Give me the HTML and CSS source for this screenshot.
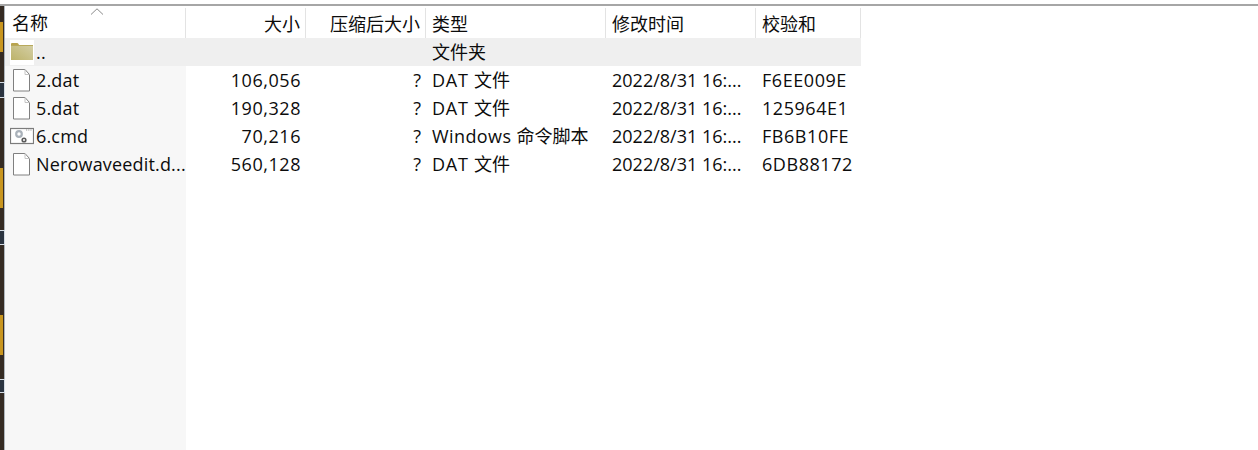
FILE: index.html
```html
<!DOCTYPE html>
<html lang="zh">
<head>
<meta charset="utf-8">
<title>文件列表</title>
<link rel="stylesheet" href="styles.css">
</head>
<body>
<div class="topline"></div>
<div class="desktop">
  <div class="strip">
    <div class="spot gold g1"></div>
    <div class="spot box b1"></div>
    <div class="spot gold g2"></div>
    <div class="spot box b2"></div>
    <div class="spot gold g3"></div>
    <div class="spot box b3"></div>
  </div>
  <div class="list">
    <div class="row head">
      <div class="c name">名称<svg class="sort" width="14" height="7" viewBox="0 0 14 7"><path d="M1 6.500 7 .8l6 5.700" fill="none" stroke="#8a8a8a"/></svg></div>
      <div class="c size">大小</div>
      <div class="c comp">压缩后大小</div>
      <div class="c type">类型</div>
      <div class="c time">修改时间</div>
      <div class="c sum">校验和</div>
    </div>
    <div class="body">
      <div class="namebg"></div>
      <div class="row up">
        <div class="c name">
          <svg class="ico" width="24" height="28" viewBox="0 0 24 28"><defs><linearGradient id="fg" x1="0" y1="1" x2="1" y2="0"><stop offset="0" stop-color="#bdb36a"/><stop offset="1" stop-color="#d4cfa6"/></linearGradient></defs><rect y="2" width="24" height="25" fill="#fff"/><path d="M1 8V6q0-1 1-1h5q1 0 1.500 1l.5 1z" fill="#b9a44e"/><path d="M1 7h22v15H1z" fill="url(#fg)"/><path d="M1 7h22v1H1z" fill="#b8a95c"/></svg>
          <span class="n">..</span>
        </div>
        <div class="c size"></div><div class="c comp"></div>
        <div class="c type">文件夹</div>
        <div class="c time"></div><div class="c sum"></div>
      </div>
      <div class="row">
        <div class="c name"><svg class="ico" width="24" height="28" viewBox="0 0 24 28"><path class="doc" d="M3.500 3.500h11.500l4.500 5v16.500h-16z"/><path class="fold" d="M15 3.500v5h4.500"/></svg><span class="n">2.dat</span></div>
        <div class="c size">106,056</div><div class="c comp">?</div><div class="c type"><span class="dat">DAT </span>文件</div><div class="c time">2022/8/31 16:...</div><div class="c sum">F6EE009E</div>
      </div>
      <div class="row">
        <div class="c name"><svg class="ico" width="24" height="28" viewBox="0 0 24 28"><path class="doc" d="M3.500 3.500h11.500l4.500 5v16.500h-16z"/><path class="fold" d="M15 3.500v5h4.500"/></svg><span class="n">5.dat</span></div>
        <div class="c size">190,328</div><div class="c comp">?</div><div class="c type"><span class="dat">DAT </span>文件</div><div class="c time">2022/8/31 16:...</div><div class="c sum">125964E1</div>
      </div>
      <div class="row">
        <div class="c name"><svg class="ico" width="24" height="28" viewBox="0 0 24 28"><rect x=".5" y="6.500" width="23" height="15" fill="#fff" stroke="#7c7c7c" stroke-width="1.200"/><path d="M16 8h1.200m1 0h1.200m1 0h1.200" stroke="#999"/><circle cx="9" cy="12" r="2.800" fill="none" stroke="#aab2ba" stroke-width="2.200"/><circle cx="14" cy="18" r="1.800" fill="none" stroke="#5c5c5c" stroke-width="1.600"/></svg><span class="n">6.cmd</span></div>
        <div class="c size">70,216</div><div class="c comp">?</div><div class="c type"><span class="win">Windows </span>命令脚本</div><div class="c time">2022/8/31 16:...</div><div class="c sum">FB6B10FE</div>
      </div>
      <div class="row">
        <div class="c name"><svg class="ico" width="24" height="28" viewBox="0 0 24 28"><path class="doc" d="M3.500 3.500h11.500l4.500 5v16.500h-16z"/><path class="fold" d="M15 3.500v5h4.500"/></svg><span class="n">Nerowaveedit.d...</span></div>
        <div class="c size">560,128</div><div class="c comp">?</div><div class="c type"><span class="dat">DAT </span>文件</div><div class="c time">2022/8/31 16:...</div><div class="c sum">6DB88172</div>
      </div>
    </div>
  </div>
</div>
</body>
</html>
```
FILE: styles.css
```css
* { box-sizing: border-box; }
html, body { margin: 0; height: 100%; background: #fff; overflow: hidden; }
body {
  font-family: "Open Sans", "Noto Sans CJK SC", sans-serif;
  font-size: 18px;
  color: #0c0c0c;
}
.topline { height: 2px; margin-top: 4px; background: #a6a6a6; }
.desktop { display: flex; width: 1258px; height: 444px; }
.strip {
  width: 5px;
  flex: none;
  background: #352b23;
  border-right: 1px solid #aeb6bd;
  display: flex;
  flex-direction: column;
}
.spot { flex: none; }
.gold { width: 3px; background: #c9961f; }
.box { background: #2b3440; border: 1px solid #d5dde5; border-left: 0; margin-right: -1px; }
.g1 { height: 30px; margin-top: 16px; }
.b1 { height: 16px; margin-top: 30px; }
.g2 { height: 40px; margin-top: 70px; }
.b2 { height: 15px; margin-top: 22px; }
.g3 { height: 40px; margin-top: 70px; }
.b3 { height: 14px; margin-top: 24px; }
.list { flex: 1; display: flex; flex-direction: column; padding-top: 2px; }
.body { position: relative; flex: 1; }
.namebg { position: absolute; left: 0; top: 0; bottom: 0; width: 181px; background: #f7f7f7; }
.row {
  position: relative;
  display: grid;
  grid-template-columns: 181px 120px 120px 180px 150px 105px;
  width: 856px;
  height: 28px;
  line-height: 28px;
}
.head { height: 30px; background: #fff; }
.head .c { border-right: 1px solid #e3e3e3; line-height: 32px; height: 30px; letter-spacing: 0; }
.up { background: #efefef; }
.c { padding: 0 6px; white-space: nowrap; overflow: hidden; }
.name { padding-left: 5px; position: relative; display: flex; align-items: center; }
.head .name { padding-left: 7px; }
.size, .comp { text-align: right; padding-right: 5px; }
.size { letter-spacing: .55px; }
.sum { letter-spacing: .55px; }
.dat { letter-spacing: .75px; }
.win { letter-spacing: .4px; }
.sort { position: absolute; left: 85px; top: 0; }
.ico { flex: none; margin-right: 2px; }
.n { display: block; letter-spacing: .17px; }
.doc { fill: #fff; stroke: #808080; }
.fold { fill: none; stroke: #c4c4c4; }
```
